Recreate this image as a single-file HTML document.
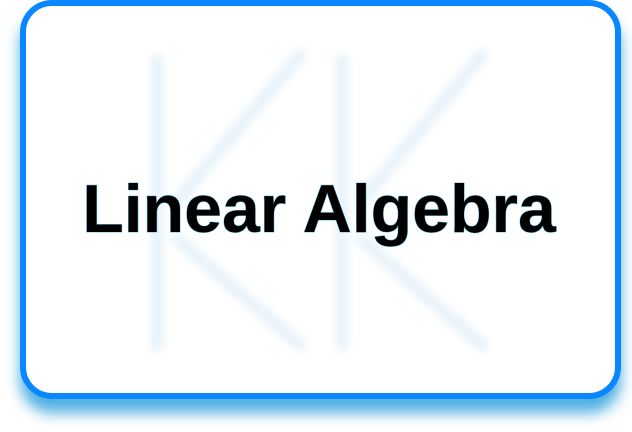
<!DOCTYPE html>
<html><head><style>
html,body{margin:0;padding:0;width:632px;height:432px;background:#fff;overflow:hidden}
.card{position:absolute;left:20px;top:0;width:589px;height:387px;border:6px solid #0a87ff;border-radius:32px;background:#fff;box-shadow:0 14px 14px rgba(20,150,215,.75)}
.wm{position:absolute;left:0;top:0;filter:blur(4px)}
.t{position:absolute;left:0;width:638px;top:170px;text-align:center;font-family:"Liberation Sans",sans-serif;font-weight:bold;font-size:68px;color:#000;-webkit-text-stroke:1px #6cc8f0;paint-order:stroke fill}
</style></head><body>
<div class="card"></div>
<svg class="wm" width="632" height="432">
<g stroke="#e8f3fa" stroke-width="13" stroke-linecap="round" fill="none">
<line x1="157" y1="60" x2="157" y2="345"/>
<line x1="300" y1="55" x2="178" y2="200"/>
<line x1="178" y1="240" x2="300" y2="345"/>
<line x1="342" y1="60" x2="342" y2="345"/>
<line x1="482" y1="55" x2="362" y2="200"/>
<line x1="362" y1="240" x2="482" y2="345"/>
</g></svg>
<div class="t">Linear Algebra</div>
</body></html>
